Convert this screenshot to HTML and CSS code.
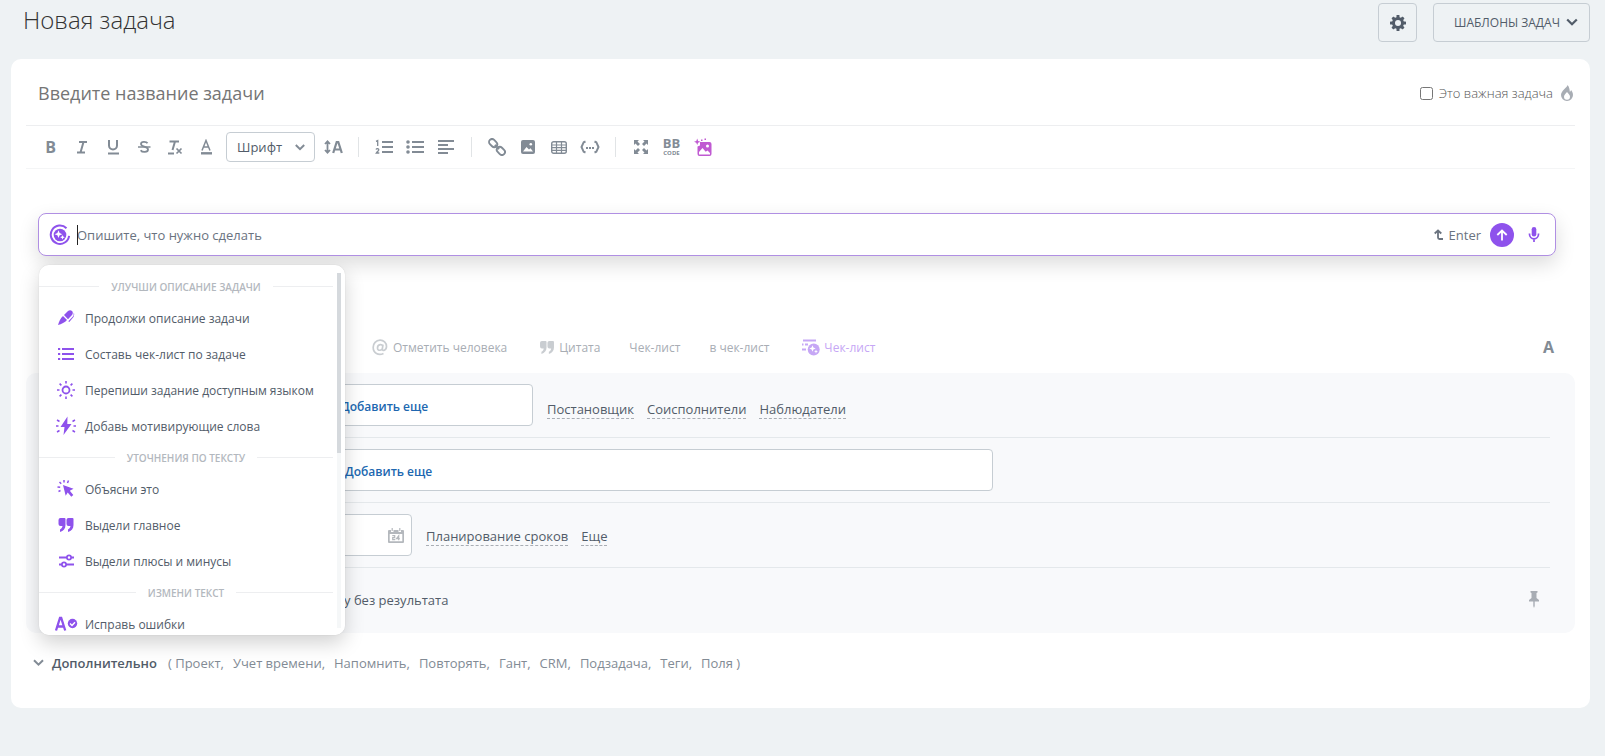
FILE: index.html
```html
<!DOCTYPE html>
<html lang="ru">
<head>
<meta charset="utf-8">
<title>Новая задача</title>
<link rel="stylesheet" href="styles.css">
</head>
<body>
<header class="page-head">
  <h1 class="page-title">Новая задача</h1>
  <div class="head-actions">
    <button class="head-btn head-btn-square" aria-label="Настройки">
      <svg width="18" height="18" viewBox="0 0 18 18"><g fill="#525c69"><circle cx="9" cy="9" r="6"/><rect x="7.5" y="1" width="3" height="16" rx=".6"/><rect x="1" y="7.500" width="16" height="3" rx=".6"/><g transform="rotate(45 9 9)"><rect x="7.500" y="1.200" width="3" height="15.600" rx=".6"/><rect x="1.200" y="7.500" width="15.600" height="3" rx=".6"/></g></g><circle cx="9" cy="9" r="3" fill="#eef2f4"/></svg>
    </button>
    <button class="head-btn head-btn-menu">ШАБЛОНЫ ЗАДАЧ
      <svg width="12" height="9" viewBox="0 0 12 9"><path d="M1.200 1.500 6 6.300l4.800-4.800" fill="none" stroke="#525c69" stroke-width="2.200"/></svg>
    </button>
  </div>
</header>

<main class="card">
  <div class="name-row">
    <input class="name-input" type="text" placeholder="Введите название задачи" aria-label="Название задачи">
    <label class="important"><input class="important-box" type="checkbox">Это важная задача
      <svg width="14" height="16" viewBox="0 0 14 16"><path fill="#a8adb4" fill-rule="evenodd" d="M7.500 0C7.400 2.500 1 5.500 1 10a6 6 0 0 0 12 0c0-2.500-1.200-4-2-5-.2 1-.6 1.500-1.200 1.800C9.700 4 9 1.500 7.500 0ZM7 7c1.500 1.800 3 3 3 4.800A2.900 2.900 0 0 1 7 14.700a2.900 2.900 0 0 1-3-2.900C4 10 5.500 8.800 7 7Z"/></svg>
    </label>
  </div>

  <div class="toolbar">
    <button class="tool tool-text">B</button>
    <button class="tool" aria-label="Курсив"><svg width="16" height="16" viewBox="0 0 16 16"><path d="M5 3h8M3 13.500h8M9.500 3 6.500 13.500" fill="none" stroke="#828b95" stroke-width="2"/></svg></button>
    <button class="tool" aria-label="Подчеркнутый"><svg width="16" height="16" viewBox="0 0 16 16"><path d="M4 1v5.500a4 4 0 0 0 8 0V1M3 14.500h11" fill="none" stroke="#828b95" stroke-width="2"/></svg></button>
    <button class="tool" aria-label="Зачеркнутый"><svg width="16" height="16" viewBox="0 0 16 16"><path d="M11.500 4.200C10.500 2.500 5 2 5 5c0 3.500 7 1.500 7 5.500 0 3.200-6 3-7.300.7" fill="none" stroke="#828b95" stroke-width="1.800"/><path d="M2 8h12.500" stroke="#828b95" stroke-width="1.500"/></svg></button>
    <button class="tool" aria-label="Убрать форматирование"><svg width="16" height="16" viewBox="0 0 16 16"><path d="M2.500 2.500h9.500M8 2.500 5.500 11M1 14.500h6" fill="none" stroke="#828b95" stroke-width="2"/><path d="m9.500 9.500 5 5m0-5-5 5" stroke="#828b95" stroke-width="1.700"/></svg></button>
    <button class="tool" aria-label="Цвет текста"><svg width="16" height="16" viewBox="0 0 16 16"><path d="M4 11.500 8 1.500l4 10M5.500 8h5" fill="none" stroke="#828b95" stroke-width="1.500"/><path d="M3 14.300h11" stroke="#828b95" stroke-width="2.400"/></svg></button>
    <span class="select-wrap">
      <select class="font-select" aria-label="Шрифт"><option>Шрифт</option></select>
      <svg class="select-arrow" width="10" height="7" viewBox="0 0 10 7"><path d="m.8 1 4.200 4.200L9.200 1" fill="none" stroke="#828b95" stroke-width="2"/></svg>
    </span>
    <button class="tool" aria-label="Размер шрифта"><svg width="20" height="16" viewBox="0 0 20 16"><path d="M4.500 3v10M2 5l2.500-2.700L7 5M2 11l2.500 2.700L7 11" fill="none" stroke="#828b95" stroke-width="1.800"/><path d="m10.200 14 3.500-11h1.600l3.500 11M11.500 10.500h6" fill="none" stroke="#828b95" stroke-width="2.200"/></svg></button>
    <span class="sep"></span>
    <button class="tool" aria-label="Нумерованный список"><svg width="18" height="16" viewBox="0 0 18 16"><path d="M7 3h11M7 8h11M7 13h11" stroke="#828b95" stroke-width="2"/><path d="M1 2.300 2.700 1.500V7M1 10.500c.5-1.200 2.800-1.200 2.800.2 0 1.200-1.500 1.800-2.500 3.300h3" fill="none" stroke="#828b95" stroke-width="1.300"/></svg></button>
    <button class="tool" aria-label="Список"><svg width="18" height="16" viewBox="0 0 18 16"><path d="M6 3h12M6 8h12M6 13h12" stroke="#828b95" stroke-width="2"/><g fill="#828b95"><circle cx="2" cy="3" r="1.800"/><circle cx="2" cy="8" r="1.800"/><circle cx="2" cy="13" r="1.800"/></g></svg></button>
    <button class="tool" aria-label="Выравнивание"><svg width="16" height="16" viewBox="0 0 16 16"><path d="M0 2h16M0 6h10M0 10h16M0 14h10" stroke="#828b95" stroke-width="1.800"/></svg></button>
    <span class="sep"></span>
    <button class="tool" aria-label="Ссылка"><svg width="18" height="18" viewBox="0 0 18 18"><g fill="none" stroke="#828b95" stroke-width="1.900" transform="rotate(45 9 9)"><rect x="-1" y="6" width="9" height="6" rx="3"/><rect x="10" y="6" width="9" height="6" rx="3"/><path d="M6 9h6"/></g></svg></button>
    <button class="tool" aria-label="Изображение"><svg width="14" height="14" viewBox="0 0 14 14"><rect width="14" height="14" rx="2" fill="#828b95"/><path d="M2 11.500 5.500 7 8 9.500l1.500-1.200 2.500 3.200Z" fill="#fff"/><circle cx="9.800" cy="4.200" r="1.300" fill="#fff"/></svg></button>
    <button class="tool" aria-label="Таблица"><svg width="16" height="13" viewBox="0 0 16 13"><rect x=".7" y=".7" width="14.600" height="11.600" rx="2" fill="none" stroke="#828b95" stroke-width="1.400"/><path d="M1 4h14M1 6.700h14M1 9.400h14M5.500 1v11M10.500 1v11" stroke="#828b95" stroke-width="1.200"/></svg></button>
    <button class="tool" aria-label="Код"><svg width="20" height="14" viewBox="0 0 20 14"><path d="M5.500 1.500 3.700 2.200 1.500 7l2.200 4.800 1.800.7M14.500 1.500l1.800.7L18.500 7l-2.200 4.800-1.800.7" fill="none" stroke="#828b95" stroke-width="2"/><path d="M6 8h2m1 0h2m1 0h2" stroke="#828b95" stroke-width="2"/></svg></button>
    <span class="sep"></span>
    <button class="tool" aria-label="На весь экран"><svg width="14" height="14" viewBox="0 0 14 14"><path d="M0 0h5L3.500 1.500 6 4 4 6 1.500 3.500 0 5ZM14 0v5l-1.500-1.500L10 6 8 4l2.500-2.500L9 0ZM0 14V9l1.500 1.500L4 8l2 2-2.500 2.500L5 14ZM14 14H9l1.500-1.500L8 10l2-2 2.500 2.500L14 9Z" fill="#828b95"/></svg></button>
    <button class="tool tool-bb"><span>BB</span><small>CODE</small></button>
    <button class="tool" aria-label="Изображение CoPilot"><svg width="18" height="18" viewBox="0 0 18 18"><path fill="#c05ad2" fill-rule="evenodd" d="M6 4h9.500A2 2 0 0 1 17.500 6v10a2 2 0 0 1-2 2h-10a2 2 0 0 1-2-2V8.500L6 7.500Zm-1 12.500h11v-1.500l-2.500-2.500-1.800 1.200L8.500 10 5 14Zm8.500-10a1.500 1.500 0 1 0 0 3 1.500 1.500 0 0 0 0-3Z"/><path fill="#c05ad2" d="m3.200.5.9 2.400 2.400.9-2.400.9-.9 2.400-.9-2.400-2.400-.9 2.400-.9ZM7 1.500h1.500V3H7ZM10.500.5H12V2h-1.500Z"/></svg></button>
  </div>

  <section class="editor">
    <div class="prompt">
      <svg class="prompt-logo" width="22" height="22" viewBox="0 0 22 22"><path d="M17.500 4.200A9.200 9.200 0 1 0 20.100 11.800" fill="none" stroke="#8e52ec" stroke-width="2"/><circle cx="11" cy="11" r="6.300" fill="#8e52ec"/><path fill="#fff" d="m9.500 6.300 1.100 2.800 2.800 1.100-2.800 1.100-1.100 2.800-1.100-2.800-2.800-1.100 2.800-1.100ZM13.500 11l.7 1.600 1.600.7-1.600.7-.7 1.600-.7-1.600-1.600-.7 1.600-.7Z"/></svg>
      <span class="prompt-field">
        <input class="prompt-input" type="text" placeholder="Опишите, что нужно сделать" aria-label="Запрос CoPilot">
        <span class="caret"></span>
      </span>
      <span class="enter-hint"><svg width="9" height="12" viewBox="0 0 9 12"><path d="M4 2v6.500c0 1 .5 1.500 1.500 1.500H9M.7 4.500 4 1.500l3.300 3" fill="none" stroke="#6a737f" stroke-width="1.800"/></svg>Enter</span>
      <button class="send" aria-label="Отправить"><svg width="12" height="12" viewBox="0 0 12 12"><path d="M6 11.500V1.500M1.300 6 6 1.500 10.700 6" fill="none" stroke="#fff" stroke-width="1.800"/></svg></button>
      <button class="mic" aria-label="Голосовой ввод"><svg width="12" height="15" viewBox="0 0 12 15"><rect x="3.700" width="4.600" height="9.500" rx="2.300" fill="#8e52ec"/><path d="M1.500 6.500v.8a4.500 4.500 0 0 0 9 0v-.8M6 11.500V15" fill="none" stroke="#8e52ec" stroke-width="1.700"/></svg></button>

      <div class="menu">
        <div class="menu-list">
          <h2 class="menu-head">УЛУЧШИ ОПИСАНИЕ ЗАДАЧИ</h2>
          <button class="menu-item"><svg width="24" height="20" viewBox="0 0 24 20"><path fill="#8e52ec" d="M4 17c1-3.500 2.500-7 5-9l4 4c-2 2.500-5.500 4-9 5ZM10 7l4-4c1.500-1.300 3-1 4 0s1.200 2.500 0 4l-4 4.200ZM18 9.500l1.500-1.800.3-3.200c.7 1.500.4 3.200-.3 4.500l-4.200 5-1-.8Z"/></svg>Продолжи описание задачи</button>
          <button class="menu-item"><svg width="24" height="20" viewBox="0 0 24 20"><path d="M8 5h12M8 10h12M8 15h12M4 5h2.200M4 10h2.200M4 15h2.200" stroke="#8e52ec" stroke-width="2"/></svg>Составь чек-лист по задаче</button>
          <button class="menu-item"><svg width="24" height="20" viewBox="0 0 24 20"><circle cx="12" cy="10" r="3.500" fill="none" stroke="#8e52ec" stroke-width="1.800"/><path d="M12 1v2.500M12 16.500V19M3 10h2.500M18.500 10H21M5.600 3.600l1.800 1.800M16.600 14.600l1.800 1.800M5.600 16.400l1.800-1.800M16.600 5.400l1.800-1.800" stroke="#8e52ec" stroke-width="1.600"/></svg>Перепиши задание доступным языком</button>
          <button class="menu-item"><svg width="24" height="20" viewBox="0 0 24 20"><path fill="#8e52ec" d="M13.500.5 6.500 11h4L9.500 19l8-11h-4.200Z"/><path d="m3 4 2.500 1.500M2 10h2.500M3 16l2.500-1.500M21 4l-2.500 1.500M22 10h-2.500M21 16l-2.500-1.500" stroke="#8e52ec" stroke-width="1.500"/></svg>Добавь мотивирующие слова</button>
          <h2 class="menu-head">УТОЧНЕНИЯ ПО ТЕКСТУ</h2>
          <button class="menu-item"><svg width="24" height="20" viewBox="0 0 24 20"><path fill="#8e52ec" d="m9 6 10.500 3.800-3.700 2 3.500 4.200-2 1.800-3.600-4.300-2 3.300Z"/><path d="M10 1v2.500M14.500 1.500l-1 2.500M5.500 3l1.700 1.800M3.500 8l2.700.3M4.500 12.500l2-1" stroke="#8e52ec" stroke-width="1.500"/></svg>Объясни это</button>
          <button class="menu-item"><svg width="24" height="20" viewBox="0 0 24 20"><path fill="#8e52ec" d="M6.500 3h4A1 1 0 0 1 11.500 4v6c0 3.500-2 6-5.500 7v-2.500c1.500-.7 2.300-2 2.500-3.500h-2a2 2 0 0 1-2-2V5a2 2 0 0 1 2-2ZM14.500 3h4a1 1 0 0 1 1 1v6c0 3.500-2 6-5.500 7v-2.500c1.500-.7 2.300-2 2.500-3.500h-2a2 2 0 0 1-2-2V5a2 2 0 0 1 2-2Z"/></svg>Выдели главное</button>
          <button class="menu-item"><svg width="24" height="20" viewBox="0 0 24 20"><path d="M5 6.500h8M17 6.500h3M5 13.500h3M12 13.500h8" stroke="#8e52ec" stroke-width="1.900"/><g fill="none" stroke="#8e52ec" stroke-width="1.700"><circle cx="15" cy="6.500" r="2.100"/><circle cx="10" cy="13.500" r="2.100"/></g></svg>Выдели плюсы и минусы</button>
          <h2 class="menu-head">ИЗМЕНИ ТЕКСТ</h2>
          <button class="menu-item"><svg width="24" height="20" viewBox="0 0 24 20"><path d="M2 16.500 6 4h1.200l4 12.500M3.500 12.500h6.300" fill="none" stroke="#8e52ec" stroke-width="2.300"/><circle cx="18.500" cy="9.500" r="4.700" fill="#8e52ec"/><path d="m16 9.500 2 2 3-3.300" fill="none" stroke="#fff" stroke-width="1.400"/></svg>Исправь ошибки</button>
        </div>
        <div class="menu-scroll"><div class="menu-thumb"></div></div>
      </div>
    </div>

    <div class="post-bar">
      <a class="post-link" href="#"><svg width="16" height="17" viewBox="0 0 16 17"><path d="M11 5.500 10.300 10c-.2 2.500 4.200 1.500 4.200-2.500A6.300 6.300 0 0 0 8 1.200 7 7 0 0 0 1.200 8.500C1.200 14 6.500 17 11.500 14.500M10.800 7.500c0-3-5.300-2.500-5.300 1.500 0 3.500 4.800 2.500 5 0" fill="none" stroke="#c9cdd1" stroke-width="1.700"/></svg>Отметить человека</a>
      <a class="post-link post-quote" href="#"><svg width="14" height="13" viewBox="4.500 3 15 14"><path fill="#c9cdd1" d="M6.500 3h4A1 1 0 0 1 11.500 4v6c0 3.500-2 6-5.500 7v-2.500c1.500-.7 2.300-2 2.500-3.500h-2a2 2 0 0 1-2-2V5a2 2 0 0 1 2-2ZM14.500 3h4a1 1 0 0 1 1 1v6c0 3.500-2 6-5.500 7v-2.500c1.500-.7 2.300-2 2.500-3.500h-2a2 2 0 0 1-2-2V5a2 2 0 0 1 2-2Z"/></svg>Цитата</a>
      <a class="post-link" href="#">Чек-лист</a>
      <a class="post-link" href="#">в чек-лист</a>
      <a class="post-link post-ai" href="#"><svg width="18" height="18" viewBox="0 0 18 18"><path d="M1 2.500h13M0 6.500h1.500M3 6.500h3M0 11.500h4" stroke="#c6a7f5" stroke-width="2"/><circle cx="11.700" cy="11.500" r="6" fill="#c6a7f5"/><path fill="#fff" d="m10.500 7.300.9 2.300 2.300.9-2.300.9-.9 2.300-.9-2.300-2.300-.9 2.300-.9ZM14 11.500l.6 1.400 1.400.6-1.400.6-.6 1.400-.6-1.400-1.400-.6 1.400-.6Z"/></svg>Чек-лист</a>
      <button class="tool tool-text post-format">A</button>
    </div>
  </section>

  <section class="options">
    <div class="option-row">
      <div class="field field-people"><a class="add-more" href="#">Добавить еще</a></div>
      <a class="dashed" href="#">Постановщик</a><a class="dashed" href="#">Соисполнители</a><a class="dashed" href="#">Наблюдатели</a>
    </div>
    <div class="option-row">
      <div class="field field-wide"><a class="add-more" href="#">Добавить еще</a></div>
    </div>
    <div class="option-row option-dates">
      <div class="field field-date"><svg width="16" height="15" viewBox="0 0 16 15"><path fill="#b4b8bd" fill-rule="evenodd" d="M1 2h2v2h2.500V2h5v2H13V2h2a1 1 0 0 1 1 1v11a1 1 0 0 1-1 1H1a1 1 0 0 1-1-1V3a1 1 0 0 1 1-1Zm.7 4v7.300h12.600V6Z"/><path d="M4.200 0v3M11.800 0v3" stroke="#b4b8bd" stroke-width="1.200"/><path d="M4.300 7.700h2.400v1.900H4.700v2h2.500M10.700 12.200V7.800L8.500 10.700h3.300" fill="none" stroke="#b4b8bd" stroke-width="1.200"/></svg></div>
      <a class="dashed" href="#">Планирование сроков</a><a class="dashed" href="#">Еще</a>
    </div>
    <div class="option-row option-last">
      <span class="result-text">у без результата</span>
      <svg width="10" height="17" viewBox="0 0 10 17"><path fill="#a8adb4" d="M1.500 0h7v1.500L7.500 2v5L10 9v1.500H5.700V15L5 17l-.7-2v-4.500H0V9l2.500-2V2l-1-.5Z"/></svg>
    </div>
  </section>

  <footer class="more">
    <button class="more-btn"><svg width="11" height="8" viewBox="0 0 11 8"><path d="m1 1.200 4.500 4.500L10 1.200" fill="none" stroke="#828b95" stroke-width="2"/></svg>Дополнительно</button>
    <span class="more-list"><span>( Проект,</span><span>Учет времени,</span><span>Напомнить,</span><span>Повторять,</span><span>Гант,</span><span>CRM,</span><span>Подзадача,</span><span>Теги,</span><span>Поля )</span></span>
  </footer>
</main>
</body>
</html>
```

FILE: styles.css
```css
* { box-sizing: border-box; }
body {
  margin: 0;
  min-height: 100vh;
  background: #eef2f4;
  font-family: "Open Sans", "Noto Sans", sans-serif;
  font-size: 13px;
  color: #525c69;
}
button, input, select { font: inherit; color: inherit; }
button { border: 0; background: none; padding: 0; cursor: pointer; }
a { color: inherit; text-decoration: none; }
svg { flex: none; display: block; }
input::placeholder { color: inherit; opacity: 1; }

.page-head {
  display: flex;
  justify-content: space-between;
  align-items: flex-start;
  padding: 3px 15px 17px 23px;
}
.page-title { margin: 0; font-size: 24px; line-height: 34px; font-weight: 300; color: #333; }
.head-actions { display: flex; gap: 16px; }
.head-btn {
  display: flex;
  align-items: center;
  justify-content: center;
  height: 39px;
  border: 1px solid #c6cdd3;
  border-radius: 4px;
}
.head-btn-square { width: 39px; }
.head-btn-menu { gap: 6px; padding: 0 11px 0 20px; font-size: 12px; font-weight: 500; }

.card { margin: 0 15px 0 11px; padding: 0 15px; background: #fff; border-radius: 10px; }

.name-row {
  display: flex;
  align-items: center;
  height: 67px;
  padding: 2px 0 0 12px;
  border-bottom: 1px solid #edeef0;
}
.name-input { flex: 1; min-width: 0; border: 0; padding: 0; outline: 0; background: none; font-size: 18px; color: #757575; }
.important { display: flex; align-items: center; font-weight: 300; color: #555; }
.important-box { width: 13px; height: 13px; margin: 0 6px 0 0; }
.important svg { margin: 0 1px 0 7px; }

.toolbar {
  display: flex;
  align-items: center;
  height: 43px;
  padding-left: 9px;
  border-bottom: 1px solid #f4f5f6;
}
.tool { display: flex; align-items: center; justify-content: center; width: 31px; height: 30px; color: #828b95; }
.tool-text { font-size: 16px; font-weight: 700; }
.tool-bb { flex-direction: column; line-height: 11px; font-weight: 700; }
.tool-bb small { font-size: 6px; line-height: 8px; }
.select-wrap { position: relative; margin: 0 2px 0 5px; }
.font-select {
  display: block;
  width: 89px;
  height: 30px;
  padding: 0 24px 0 10px;
  border: 1px solid #c6cdd3;
  border-radius: 4px;
  background: #fff;
  appearance: none;
}
.select-arrow { position: absolute; right: 10px; top: 12px; pointer-events: none; }
.sep { width: 1px; height: 20px; margin: 0 9px 0 10px; background: #e1e4e6; }

.editor { padding: 44px 19px 6px 12px; }
.prompt {
  position: relative;
  display: flex;
  align-items: center;
  height: 43px;
  padding: 0 15px 0 10px;
  border: 1px solid #b08fe3;
  border-radius: 8px;
  background: #fff;
  box-shadow: 0 8px 20px rgba(0, 0, 0, .14);
}
.prompt-field { position: relative; flex: 1; margin-left: 6px; }
.prompt-input { display: block; width: 100%; height: 20px; border: 0; padding: 0; outline: 0; background: none; color: #6a737f; }
.caret { position: absolute; left: 0; top: 0; width: 1px; height: 100%; background: #222; }
.enter-hint { display: flex; align-items: center; gap: 6px; margin-right: 9px; color: #6a737f; }
.send { display: flex; align-items: center; justify-content: center; width: 24px; height: 24px; border-radius: 50%; background: #8e52ec; }
.mic { margin-left: 14px; }

.menu {
  position: absolute;
  left: 0;
  top: 51px;
  z-index: 2;
  display: flex;
  width: 306px;
  height: 370px;
  padding: 8px 4px 0 0;
  overflow: hidden;
  border-radius: 10px;
  background: #fff;
}
.prompt::after {
  content: "";
  position: absolute;
  left: 0;
  top: 51px;
  z-index: 1;
  width: 306px;
  height: 370px;
  border-radius: 10px;
  box-shadow: 0 8px 20px rgba(0, 0, 0, .18), 0 0 1px rgba(0, 0, 0, .2);
}
.menu-list { flex: 1; }
.menu-head {
  display: flex;
  align-items: center;
  gap: 12px;
  height: 27px;
  margin: 0;
  font-size: 10px;
  font-weight: 600;
  color: #b3b8be;
}
.menu-head::before, .menu-head::after { content: ""; flex: 1; height: 1px; background: #edeef0; }
.menu-item { display: flex; align-items: center; gap: 7px; width: 100%; height: 36px; padding-left: 15px; font-size: 12px; white-space: nowrap; }
.menu-scroll { width: 4px; height: 355px; margin-left: 4px; background: #f5f7f8; }
.menu-thumb { height: 180px; background: #d5d9dd; }

.post-bar { display: flex; align-items: center; height: 40px; margin-top: 71px; padding-left: 334px; font-size: 12px; color: #a8adb4; }
.post-link { display: flex; align-items: center; gap: 5px; margin-right: 29px; }
.post-quote { margin-left: 4px; }
.post-ai { color: #c6a7f5; gap: 4px; margin-left: 4px; }
.post-format { margin-left: auto; width: 15px; }

.options { padding: 0 25px 0 157px; border-radius: 10px; background: #f8f9fb; }
.option-row { display: flex; align-items: center; height: 65px; border-bottom: 1px solid #e4e8eb; }
.field {
  display: flex;
  align-items: center;
  height: 42px;
  margin-right: 14px;
  border: 1px solid #c6cdd3;
  border-radius: 4px;
  background: #fff;
}
.field-people { width: 350px; padding: 2px 0 0 157px; }
.field-wide { width: 810px; padding: 2px 0 0 161px; }
.field-date { width: 229px; justify-content: flex-end; padding-right: 7px; }
.add-more { font-size: 12px; font-weight: 600; color: #2067b0; }
.dashed { margin: 8px 13px 0 0; line-height: 18px; border-bottom: 1px dashed #a8adb4; }
.option-dates .dashed { margin-top: 3px; }
.option-last { border: 0; justify-content: space-between; padding: 0 11px 2px 161px; }

.more { display: flex; align-items: center; gap: 11px; padding: 20px 0 35px 7px; line-height: 20px; }
.more-btn { display: flex; align-items: center; gap: 8px; font-weight: 600; }
.more-list { display: flex; gap: 9px; color: #828b95; }
```
